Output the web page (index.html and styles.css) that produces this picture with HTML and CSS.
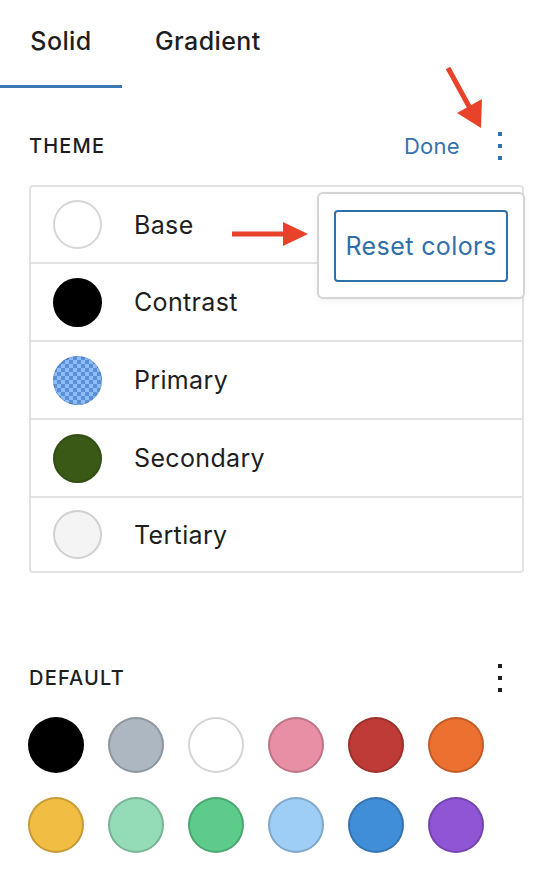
FILE: index.html
```html
<!DOCTYPE html>
<html lang="en">
<head>
<meta charset="utf-8">
<title>Color panel</title>
<link rel="stylesheet" href="styles.css">
</head>
<body>
<div class="panel">
  <div class="tabs">
    <div class="tab active">Solid</div>
    <div class="tab">Gradient</div>
  </div>

  <section class="section theme">
    <div class="section-head">
      <h2 class="label">THEME</h2>
      <div class="actions">
        <span class="done">Done</span>
        <span class="kebab blue"><i></i><i></i><i></i></span>
      </div>
    </div>
    <ul class="list">
      <li class="row"><span class="dot base"></span><span class="name">Base</span></li>
      <li class="row"><span class="dot contrast"></span><span class="name">Contrast</span></li>
      <li class="row"><span class="dot primary"></span><span class="name">Primary</span></li>
      <li class="row"><span class="dot secondary"></span><span class="name">Secondary</span></li>
      <li class="row"><span class="dot tertiary"></span><span class="name">Tertiary</span></li>
    </ul>
    <div class="popover">
      <button class="reset">Reset colors</button>
    </div>
  </section>

  <section class="section default">
    <div class="section-head">
      <h2 class="label">DEFAULT</h2>
      <span class="kebab"><i></i><i></i><i></i></span>
    </div>
    <div class="swatches">
      <span class="sw c1"></span><span class="sw c2"></span><span class="sw c3"></span>
      <span class="sw c4"></span><span class="sw c5"></span><span class="sw c6"></span>
      <span class="sw c7"></span><span class="sw c8"></span><span class="sw c9"></span>
      <span class="sw c10"></span><span class="sw c11"></span><span class="sw c12"></span>
    </div>
  </section>

  <svg class="arrows" width="550" height="880" viewBox="0 0 550 880" aria-hidden="true">
    <line x1="448" y1="68" x2="471" y2="110" stroke="#e8432a" stroke-width="5"/>
    <polygon points="457,113 482,99 481,128" fill="#e8432a"/>
    <line x1="232" y1="234" x2="286" y2="234" stroke="#e8432a" stroke-width="5"/>
    <polygon points="283,222 308,234 283,246" fill="#e8432a"/>
  </svg>
</div>
</body>
</html>
```

FILE: styles.css
```css
* { box-sizing: border-box; }
html, body { margin: 0; padding: 0; background: #fff; }
body {
  font-family: Inter, "Liberation Sans", sans-serif;
  color: #1e1e1e;
}
.panel { position: relative; width: 550px; height: 880px; overflow: hidden; }

.tabs { display: flex; height: 88px; }
.tab {
  height: 88px;
  display: flex; align-items: center; justify-content: center;
  font-size: 25px; font-weight: 500; letter-spacing: 0.4px;
  padding: 0 0 6px 0;
}
.tab.active { width: 122px; box-shadow: inset 0 -3px 0 #3a77b3; }
.tab + .tab { padding-left: 33px; }

.section { position: relative; padding: 0 26px 0 29px; }
.section-head {
  display: flex; align-items: center; justify-content: space-between;
  height: 48px;
}
.theme { padding-top: 34px; }
.theme .section-head { margin-bottom: 15px; }
.label { margin: 0; font-size: 20px; font-weight: 500; letter-spacing: 1.2px; }
.actions { display: flex; align-items: center; }
.done { font-size: 22px; color: #3472ae; margin-right: 16px; letter-spacing: 0.3px; }
.kebab {
  width: 48px; height: 48px;
  display: flex; flex-direction: column; align-items: center; justify-content: center; gap: 8px;
}
.kebab i { display: block; width: 4px; height: 4px; background: #1e1e1e; }
.kebab.blue i { background: #3472ae; }

.list {
  list-style: none; margin: 0; padding: 0;
  border: 2px solid #e2e2e2; border-radius: 4px;
  width: 495px;
}
.row {
  display: flex; align-items: center;
  height: 75px; padding-left: 22px;
  font-size: 25px; letter-spacing: 0.35px;
}
.row + .row { border-top: 2px solid #e2e2e2; height: 78px; }
.row:last-child { height: 75px; }
.dot { width: 49px; height: 49px; border-radius: 50%; flex: none; margin-right: 32px; }
.base { background: #fff; border: 2px solid #d6d6d6; }
.contrast { background: #000; }
.primary {
  background: repeating-conic-gradient(#5a90d8 0 25%, #8dbdf6 0 50%) 0 0 / 8px 8px;
  box-shadow: inset 0 0 0 1px rgba(0,0,0,0.12);
}
.secondary { background: #3b5916; box-shadow: inset 0 0 0 2px rgba(0,0,0,0.12); }
.tertiary { background: #f4f4f4; border: 2px solid #d0d0d0; }

.popover {
  position: absolute; left: 317px; top: 104px;
  width: 208px; height: 107px;
  background: #fff; border: 2px solid #d4d4d4; border-radius: 6px;
  box-shadow: 0 2px 6px rgba(0,0,0,0.06);
  display: flex; align-items: center; justify-content: center;
}
.reset {
  width: 174px; height: 72px;
  background: #fff; border: 2px solid #3070a9; border-radius: 4px;
  font-family: inherit; font-size: 25px; letter-spacing: 0.4px; color: #3070a9;
  padding: 0;
}

.default { margin-top: 81px; }
.swatches {
  display: grid; grid-template-columns: repeat(6, 56px);
  column-gap: 24px; row-gap: 24px;
  margin-top: 15px; margin-left: -1px;
}
.sw { width: 56px; height: 56px; border-radius: 50%; box-shadow: inset 0 0 0 2px rgba(0,0,0,0.18); }
.c1 { background: #000; box-shadow: none; }
.c2 { background: #adb7c1; }
.c3 { background: #fff; box-shadow: inset 0 0 0 2px #d4d4d4; }
.c4 { background: #e88fa5; }
.c5 { background: #bf3b37; }
.c6 { background: #ec702f; }
.c7 { background: #f2bd43; }
.c8 { background: #94dbb7; }
.c9 { background: #5dcb8a; }
.c10 { background: #9ecdf6; }
.c11 { background: #418ed8; }
.c12 { background: #8f55d5; }

.arrows { position: absolute; left: 0; top: 0; pointer-events: none; }
```
